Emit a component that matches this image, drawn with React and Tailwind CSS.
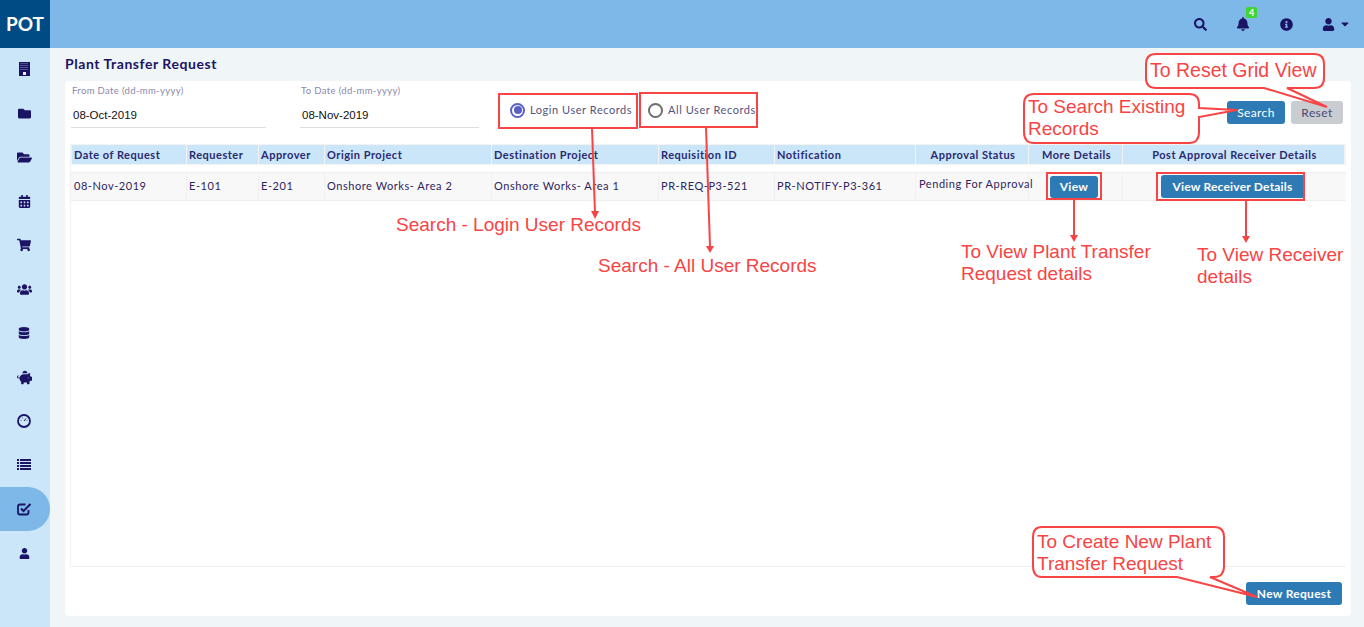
import React from "react";
import {
  FaFolder, FaFolderOpen, FaCalendarAlt, FaShoppingCart, FaUsers, FaDatabase,
  FaPiggyBank, FaUser, FaSearch, FaBell, FaInfoCircle, FaCaretDown,
} from "react-icons/fa";

const navy = "text-[#1b1464]";
const grid = "grid grid-cols-[115px_72px_66px_167px_167px_116px_141px_113px_94px_222px]";

// these are not close enough in the icon package
const BuildingIcon = () => (
  <svg width="11" height="14" viewBox="0 0 11 14">
    <rect width="11" height="14" fill="currentColor" />
    <path d="M1.5 1.5H9.5M1.5 3.5H9.5M1.5 5.5H9.5M1.5 7.5H9.5" stroke="#7f8db5" strokeWidth="1" strokeDasharray="1 1" />
    <rect x="4" y="10" width="3" height="3" fill="#e8f2fb" />
  </svg>
);

const GaugeIcon = () => (
  <svg width="14" height="14" viewBox="0 0 14 14" fill="none" stroke="currentColor">
    <circle cx="7" cy="7" r="6" strokeWidth="1.8" />
    <path d="M7 7L9 4.5" strokeWidth="1" />
    <path d="M3.5 6.5H4.5M5 4H6M9.5 6.5H10.5" strokeWidth="1" opacity="0.6" />
  </svg>
);

const CheckIcon = () => (
  <svg width="15" height="14" viewBox="0 0 15 14" fill="none" stroke="currentColor">
    <path d="M11.5 8V10.5Q11.5 12.5 9.5 12.5H3Q1 12.5 1 10.5V4.5Q1 2.5 3 2.5H8.5" strokeWidth="1.8" />
    <path d="M4 6.5L6.5 9L13.5 2" strokeWidth="2" />
  </svg>
);

const ListIcon = () => (
  <svg width="14" height="12" viewBox="0 0 14 12" fill="currentColor">
    {[0, 3, 6, 9].map((y) => (
      <g key={y}>
        <rect y={y} width="2" height="2" />
        <rect x="3" y={y} width="11" height="2" />
      </g>
    ))}
  </svg>
);

const sideIcons = [
  [<BuildingIcon />, false], [<FaFolder size={13} />, false], [<FaFolderOpen size={15} />, false],
  [<FaCalendarAlt size={13} />, false], [<FaShoppingCart size={14} />, false], [<FaUsers size={15} />, false],
  [<FaDatabase size={12} />, false], [<FaPiggyBank size={15} />, false], [<GaugeIcon />, false],
  [<ListIcon />, false], [<CheckIcon />, true], [<FaUser size={11} />, false],
];

const headers = [
  ["Date of Request", ""], ["Requester", ""], ["Approver", ""], ["Origin Project", ""],
  ["Destination Project", ""], ["Requisition ID", ""], ["Notification", ""],
  ["Approval Status", "text-center"], ["More Details", "text-center"],
  ["Post Approval Receiver Details", "text-center"],
];

const cells = [
  "08-Nov-2019", "E-101", "E-201", "Onshore Works- Area 2", "Onshore Works- Area 1",
  "PR-REQ-P3-521", "PR-NOTIFY-P3-361",
];

const notes = [
  ["left-[1150px] top-[59px] text-[19.5px]", "To Reset Grid View"],
  ["left-[1028px] top-[96px] text-[19px]", "To Search Existing\nRecords"],
  ["left-[396px] top-[214px] text-[19px]", "Search - Login User Records"],
  ["left-[598px] top-[255px] text-[19px]", "Search - All User Records"],
  ["left-[961px] top-[241px] text-[19px]", "To View Plant Transfer\nRequest details"],
  ["left-[1197px] top-[244px] text-[19px]", "To View Receiver\ndetails"],
  ["left-[1037px] top-[531px] text-[19px]", "To Create New Plant\nTransfer Request"],
];

function Callouts() {
  return (
    <svg className="absolute left-0 top-0" width="1364" height="627" fill="none" stroke="#f84444" strokeWidth="2">
      {/* boxes */}
      <rect x="499" y="94" width="138" height="34" />
      <rect x="640" y="93" width="117" height="34" />
      <rect x="1047" y="173" width="54" height="26" />
      <rect x="1157" y="173" width="147" height="27" />
      {/* speech bubbles */}
      <path fill="#fff" d="M1156 54H1314Q1324 54 1324 64V78Q1324 88 1314 88H1287L1327 107L1264 88H1156Q1146 88 1146 78V64Q1146 54 1156 54Z" />
      <path fill="#fff" d="M1034 94H1189Q1199 94 1199 104V108L1237 110L1199 117V132Q1199 143 1189 143H1034Q1024 143 1024 132V104Q1024 94 1034 94Z" />
      <path fill="#fff" d="M1042 527H1214Q1224 527 1224 537V566Q1224 577 1214 577H1210L1257 597L1177 577H1042Q1033 577 1033 566V537Q1033 527 1042 527Z" />
      {/* arrows */}
      <path d="M592 128L595 213M706 127L710 247M1074 199V237M1246 200V238" />
      <g fill="#f84444" stroke="none">
        <path d="M591 211L599 211L595 219Z" />
        <path d="M706 246L714 246L710 253Z" />
        <path d="M1070 235H1078L1074 242Z" />
        <path d="M1242 236H1250L1246 243Z" />
      </g>
    </svg>
  );
}

function DateField({ label, value, width }) {
  return (
    <div className={width}>
      <div className="ml-[1px] h-[13px] text-[9.5px] leading-[13px] tracking-[0.35px] text-[#8a88ad]">{label}</div>
      <div className="mt-[11px] border-b border-[#dedede] pb-[5px] pl-[2px] font-['Liberation_Sans'] text-[11.5px] leading-[14px] text-[#111]">
        {value}
      </div>
    </div>
  );
}

export default function App() {
  return (
    <div className="relative flex h-[627px] w-[1364px] overflow-hidden bg-[#f0f5f8] font-['Lato',sans-serif]">
      <aside className={`flex w-[50px] shrink-0 flex-col bg-[#cbe5f9] ${navy}`}>
        <div className="flex h-[48px] items-center justify-center bg-[#004b84] text-[19px] font-bold text-white">POT</div>
        <div className="-mt-[1px] flex flex-col">
          {sideIcons.map(([icon, active], i) => (
            <div
              key={i}
              className={`flex h-[44px] items-center justify-center pr-[2px] ${active ? "rounded-r-[22px] bg-[#7db8e8]" : ""}`}
            >
              {icon}
            </div>
          ))}
        </div>
      </aside>

      <div className="flex min-w-0 flex-1 flex-col">
        <header className={`flex h-[48px] shrink-0 items-center justify-end bg-[#7db8e8] pr-[13px] ${navy}`}>
          <FaSearch size={13} />
          <div className="relative ml-[29px]">
            <FaBell size={14} />
            <span className="absolute left-[10px] top-[-10px] flex h-[11px] w-[11px] items-center justify-center rounded-[2px] bg-[#3fd62f] text-[9px] font-bold text-white">4</span>
          </div>
          <FaInfoCircle size={13} className="ml-[30px]" />
          <FaUser size={13} className="ml-[29px]" />
          <FaCaretDown size={12} className="ml-[4px]" />
        </header>

        <main className="flex min-h-0 flex-1 flex-col pl-[15px] pr-[13px]">
          <h1 className={`mt-[7px] h-[26px] text-[14px] font-bold leading-[17px] tracking-[0.55px] ${navy}`}>Plant Transfer Request</h1>
          <section className="mb-[11px] flex min-h-0 flex-1 flex-col rounded-[4px] bg-white px-[5px]">
            <div className="flex h-[64px] pt-[3px]">
              <DateField label="From Date (dd-mm-yyyy)" value="08-Oct-2019" width="ml-[1px] w-[195px]" />
              <DateField label="To Date (dd-mm-yyyy)" value="08-Nov-2019" width="ml-[34px] w-[179px]" />
              <label className="ml-[31px] mt-[18px] flex h-[16px] items-center text-[11px] tracking-[0.55px] text-[#54527c]">
                <span className="flex h-[15px] w-[15px] items-center justify-center rounded-full border-2 border-[#5a60c4]">
                  <span className="h-[8px] w-[8px] rounded-full bg-[#5a60c4]" />
                </span>
                <span className="ml-[5px]">Login User Records</span>
              </label>
              <label className="ml-[16px] mt-[18px] flex h-[16px] items-center text-[11px] tracking-[0.55px] text-[#54527c]">
                <span className="h-[15px] w-[15px] rounded-full border-2 border-[#6e6e6e]" />
                <span className="ml-[5px]">All User Records</span>
              </label>
              <div className="ml-auto mr-[3px] mt-[17px] flex h-[23px] gap-[6px] text-[12px] tracking-[0.4px]">
                <button className="w-[58px] rounded-[3px] bg-[#2d7ab5] text-white">Search</button>
                <button className="w-[52px] rounded-[3px] bg-[#c9ccd1] text-[#4a4a72]">Reset</button>
              </div>
            </div>

            <div className="-mt-[1px] flex min-h-0 flex-1 flex-col border-b border-l border-[#f0f0f0]">
              <div className={`${grid} gap-x-0 bg-[#f3f3f3] py-[1px] pl-[1px]`}>
                {headers.map(([text, align]) => (
                  <div
                    key={text}
                    className={`mr-[1px] h-[19px] bg-[#cbe5f9] pl-[2px] text-[11px] font-bold leading-[19px] tracking-[0.5px] text-[#2a2a72] ${align}`}
                  >
                    {text}
                  </div>
                ))}
              </div>
              <div className={`${grid} mt-[7px] h-[29px] border-y border-[#efefef] bg-[#f8f8f8] pl-[1px] text-[11px] tracking-[0.55px] text-[#2d2560]`}>
                {cells.map((text) => (
                  <div key={text} className="border-r border-[#f0f0f0] pl-[2px] leading-[26px]">{text}</div>
                ))}
                <div className="whitespace-nowrap border-r border-[#f0f0f0] pl-[3px] leading-[22px]">Pending For Approval</div>
                <div className="flex items-center justify-center border-r border-[#f0f0f0]">
                  <button className="-ml-[3px] h-[22px] w-[48px] rounded-[3px] bg-[#2d7ab5] text-[12px] font-bold tracking-[0.3px] text-white">View</button>
                </div>
                <div className="flex items-center justify-center">
                  <button className="-ml-[3px] h-[23px] w-[144px] rounded-[3px] bg-[#2d7ab5] text-[12px] font-bold tracking-[0.2px] text-white">View Receiver Details</button>
                </div>
              </div>
            </div>

            <div className="flex h-[49px] items-start justify-end pr-[4px] pt-[15px]">
              <button className="h-[23px] w-[96px] rounded-[3px] bg-[#2d7ab5] text-[12px] font-bold tracking-[0.3px] text-white">New Request</button>
            </div>
          </section>
        </main>
      </div>

      <Callouts />
      {notes.map(([pos, text]) => (
        <div
          key={text}
          className={`absolute ${pos} whitespace-pre font-['Liberation_Sans',sans-serif] leading-[22px] text-[#f84444]`}
        >
          {text}
        </div>
      ))}
    </div>
  );
}
